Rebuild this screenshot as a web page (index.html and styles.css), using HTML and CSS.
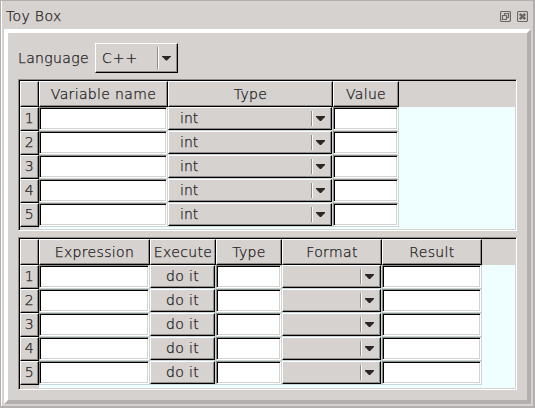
FILE: index.html
```
<!DOCTYPE html>
<html lang="en">
<head>
<meta charset="utf-8">
<title>Toy Box</title>
<link rel="stylesheet" href="styles.css">
</head>
<body>
<div class="window">
  <header class="titlebar">
    <span class="title">Toy Box</span>
    <svg class="tool" width="11" height="11" viewBox="0 0 11 11"><rect x=".5" y=".5" width="10" height="10" rx="1.5"/><path d="M4.5 4V2.5h4v4H7M2.5 4.5h4v4h-4z"/></svg>
    <svg class="tool" width="11" height="11" viewBox="0 0 11 11"><rect x=".5" y=".5" width="10" height="10" rx="1.5"/><path class="cross" d="M2.8 2.8l5.4 5.4M8.2 2.8l-5.4 5.4"/></svg>
  </header>
  <main class="panel">
    <div class="language"><span class="label">Language</span><div class="combo big"><span>C++</span><i class="arrow"></i></div></div>
    <div class="table variables" id="variables"></div>
    <div class="table expressions" id="expressions"></div>
  </main>
</div>
<script src="script.js"></script>
</body>
</html>
```
FILE: styles.css
```
* { box-sizing: border-box; }
body {
  margin: 0;
  font: 200 14px/18px "DejaVu Sans Light", "DejaVu Sans", sans-serif;
  -webkit-text-stroke: 0.25px #1c1a19;
  letter-spacing: 0.35px;
  color: #1c1a19;
  background: #d6d2d0;
}
.window {
  width: 535px;
  height: 408px;
  padding: 0 2px 2px 2px;
  border: solid #b3afae;
  border-width: 1px 2px 2px 1px;
  box-shadow: inset 1px 0 #fff;
  display: flex;
  flex-direction: column;
}
.titlebar { height: 28px; display: flex; align-items: center; padding: 2px 3px 0 3px; gap: 6px; }
.title { flex: 1; }
.tool { fill: none; stroke: #6b6866; stroke-width: 1.2; }
.cross { stroke-width: 2.6; }
.panel {
  margin-left: 1px;
  flex: 1;
  border: 4px solid;
  border-color: #fff #b3afae #b3afae #fff;
  padding: 9px 10px;
}
.language { display: flex; height: 32px; align-items: center; }
.label { width: 77px; }
.combo {
  display: flex;
  align-items: center;
  justify-content: space-between;
  background: #d6d2d0;
  border: 1px solid;
  border-color: #fff #000 #000 #fff;
  box-shadow: inset -1px -1px #8e8b89;
  padding-left: 11px;
}
.combo.big { width: 83px; height: 30px; padding-left: 6px; }
.big span { letter-spacing: 1px; }
.cell .combo span { letter-spacing: 0; padding-bottom: 2px; }
.arrow {
  width: 20px;
  height: 15px;
  border-left: 1px solid #8e8b89;
  box-shadow: inset 1px 0 #fff;
  display: flex;
  align-items: center;
  padding-left: 4px;
}
.arrow::before {
  content: "";
  width: 9px;
  height: 5px;
  background: #2a2726;
  clip-path: polygon(0 0, 100% 0, 100% 20%, 56% 100%, 44% 100%, 0 20%);
}
.big .arrow { height: 22px; }
.table {
  width: 499px;
  border: 1px solid;
  border-color: #8e8b89 #fff #fff #8e8b89;
  box-shadow: inset 1px 1px #000, inset -1px -1px #d6d2d0;
  padding: 1px;
  background: #efffff;
  display: flex;
  flex-direction: column;
}
.variables { height: 152px; margin-top: 5px; }
.expressions { height: 153px; margin-top: 6px; }
.row { display: grid; height: 24px; flex: none; }
.row.head { height: 26px; background: #d6d2d0; }
.variables .row { grid-template-columns: 19px 129px 165px 66px; }
.expressions .row { grid-template-columns: 19px 111px 66px 66px 100px 100px; }
.th {
  background: #d6d2d0;
  border: 1px solid;
  border-color: #fff #000 #000 #fff;
  box-shadow: inset -1px -1px #8e8b89;
  display: flex;
  align-items: center;
  justify-content: center;
  white-space: nowrap;
}
.row:not(.head) .th { padding-bottom: 2px; }
.cell { border: solid #cbd6d6; border-width: 0 1px 1px 0; display: grid; }
.edit {
  background: #fff;
  border: 1px solid;
  border-color: #8e8b89 #fff #fff #8e8b89;
  box-shadow: inset 1px 1px #000, inset -1px -1px #d6d2d0;
}
.button {
  background: #d6d2d0;
  border: 1px solid;
  border-color: #fff #000 #000 #fff;
  box-shadow: inset -1px -1px #8e8b89;
  text-align: center;
  line-height: 20px;
}
.stub { flex: 1; width: 19px; background: #d6d2d0; }
```
FILE: script.js
```
const widgets = {
  edit: '<div class="edit"></div>',
  button: '<div class="button">do it</div>',
  int: '<div class="combo"><span>int</span><i class="arrow"></i></div>',
  combo: '<div class="combo"><span></span><i class="arrow"></i></div>'
};
function build(id, columns) {
  let html = '<div class="row head"><div class="th"></div>' +
    columns.map(c => `<div class="th">${c[0]}</div>`).join('') + '</div>';
  for (let n = 1; n <= 5; n++) {
    html += `<div class="row"><div class="th">${n}</div>` +
      columns.map(c => `<div class="cell">${widgets[c[1]]}</div>`).join('') + '</div>';
  }
  document.getElementById(id).innerHTML = html + '<div class="stub"></div>';
}
build('variables', [['Variable name', 'edit'], ['Type', 'int'], ['Value', 'edit']]);
build('expressions', [['Expression', 'edit'], ['Execute', 'button'], ['Type', 'edit'], ['Format', 'combo'], ['Result', 'edit']]);
```
